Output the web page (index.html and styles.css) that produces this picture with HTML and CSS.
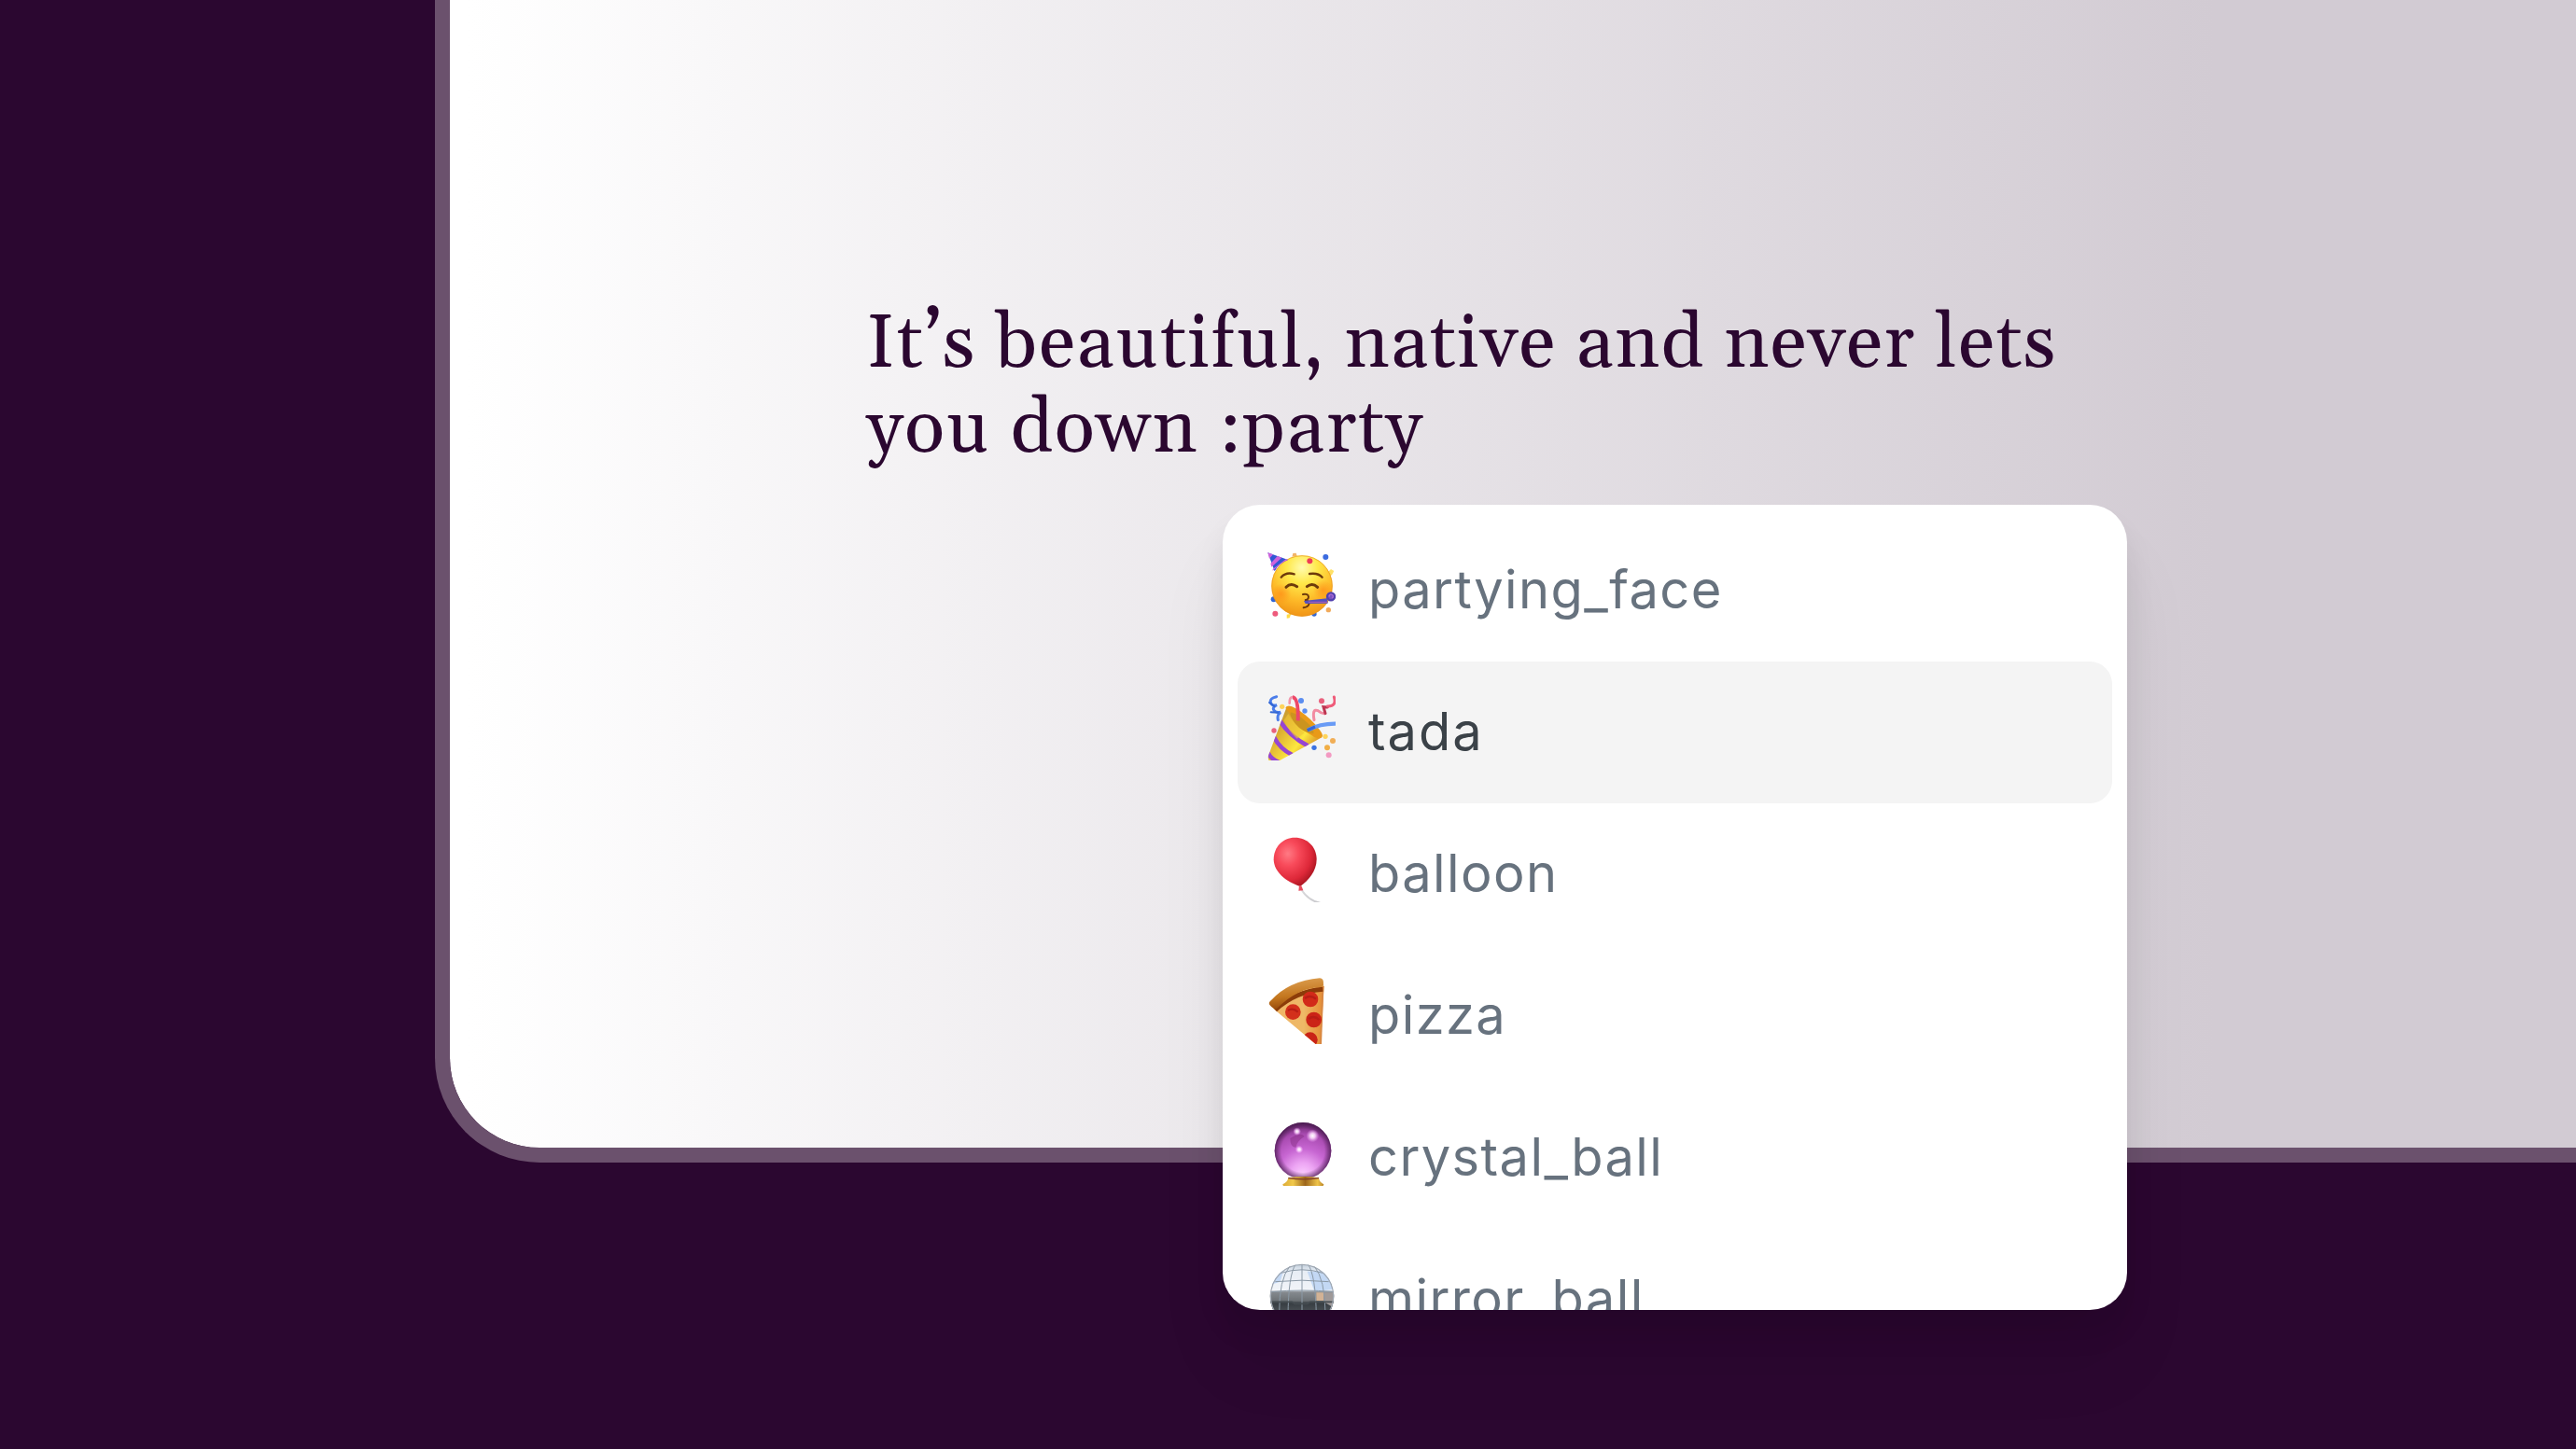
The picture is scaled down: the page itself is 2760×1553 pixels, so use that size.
FILE: index.html
```html
<!DOCTYPE html>
<html lang="en">
<head>
    <meta charset="UTF-8">
    <meta name="viewport" content="width=device-width, initial-scale=1.0">
    <title>Emoji autocomplete</title>
    <link rel="stylesheet" href="styles.css">
</head>
<body>
    <main class="editor">
        <p class="text">
            <span class="line">It’s beautiful, native and never lets</span>
            <span class="line">you down :party</span>
        </p>
    </main>

    <ul class="emoji-menu">
        <li class="emoji-item">
            <svg class="emoji" viewBox="54 63 219 216">
                <defs>
                    <radialGradient id="face" cx="0.5" cy="0.2" r="0.85">
                        <stop offset="0" stop-color="#fffbb0"/>
                        <stop offset="0.3" stop-color="#ffe94a"/>
                        <stop offset="0.65" stop-color="#fdb827"/>
                        <stop offset="1" stop-color="#ee8c12"/>
                    </radialGradient>
                    <radialGradient id="cheek">
                        <stop offset="0" stop-color="#ff9018" stop-opacity="0.75"/>
                        <stop offset="1" stop-color="#ff9018" stop-opacity="0"/>
                    </radialGradient>
                </defs>
                <path d="M133 80l3-11 10-1 3 10z" fill="#f2b469"/>
                <circle cx="74" cy="217" r="9" fill="#2c63d8"/>
                <circle cx="79" cy="263" r="9" fill="#ee5a7c"/>
                <path d="M116 266l14-3-5 14-9 1z" fill="#ffdb45"/>
                <circle cx="204" cy="264" r="8" fill="#3767cf"/>
                <circle cx="250" cy="251" r="8" fill="#f1ab5c"/>
                <path d="M248 130l10-10 10 6-7 13-12 4z" fill="#ffe168"/>
                <circle cx="241" cy="81" r="9" fill="#3b6be0"/>
                <circle cx="165" cy="174" r="98" fill="url(#face)"/>
                <circle cx="165" cy="174" r="97" fill="none" stroke="#e8961c" stroke-width="3" opacity="0.7"/>
                <circle cx="97" cy="200" r="33" fill="url(#cheek)"/>
                <circle cx="233" cy="188" r="33" fill="url(#cheek)"/>
                <path d="M55 67l65 23q-29 10-43 37z" fill="#3158d4"/>
                <path d="M55 67l17 6-12 13zM86 78l14 5-33 30-3-11zM113 88l7 2q-22 8-33 22l-16 13 0-5z" fill="#cf62dc"/>
                <circle cx="190" cy="94" r="9" fill="#ee3c58"/>
                <g fill="none" stroke="#6d3a0b" stroke-linecap="round">
                    <path d="M98 146q16-18 42-10" stroke-width="7"/>
                    <path d="M189 135q28-4 41 11" stroke-width="7"/>
                    <path d="M114 178q15-16 35-2M181 176q17-14 34 2" stroke-width="9"/>
                    <path d="M168 201q17-3 18 8 0 9-12 11 14 1 14 10-2 12-18 14" stroke-width="6"/>
                </g>
                <path d="M171 222l75-8 2 16-72 1z" fill="#5550bd"/>
                <path d="M186 226h60" stroke="#a05cb6" stroke-width="4"/>
                <circle cx="258" cy="208" r="12" fill="#7a51c0" stroke="#5140ae" stroke-width="7"/>
                <path d="M253 209a6 6 0 1 1 8 4" stroke="#a56ad5" stroke-width="4" fill="none"/>
            </svg>
            <span class="name">partying_face</span>
        </li>
        <li class="emoji-item selected">
            <svg class="emoji" viewBox="54 54 219 216">
                <defs>
                    <linearGradient id="cone" x1="0" y1="0.3" x2="0.7" y2="0.85">
                        <stop offset="0" stop-color="#b88a2a"/>
                        <stop offset="0.3" stop-color="#dcae32"/>
                        <stop offset="0.75" stop-color="#fde73f"/>
                        <stop offset="1" stop-color="#e0a22a"/>
                    </linearGradient>
                    <clipPath id="coneClip">
                        <path d="M117 95L57 254q-5 26 24 23L229 196z"/>
                    </clipPath>
                </defs>
                <path d="M117 95L57 254q-5 26 24 23L229 196z" fill="url(#cone)"/>
                <g clip-path="url(#coneClip)" fill="none" stroke="#9645d3">
                    <path d="M92 140q34 53 92 83" stroke-width="14"/>
                    <path d="M75 195q19 38 60 58" stroke-width="14"/>
                    <path d="M56 246q9 19 34 30" stroke-width="14"/>
                </g>
                <path d="M113 99q9-11 32 4 45 26 76 68 17 22 5 26-17 5-30-8-47-24-75-76-10-7-8-14z" fill="#e99a18"/>
                <path d="M128 115q23 5 52 32 26 23 22 37-35-3-58-31-19-24-16-38z" fill="#cb941f"/>
                <path d="M121 120q18 35 52 61l-24 19q-28-25-42-59z" fill="#f0c637" opacity="0.6"/>
                <g fill="none" stroke-linecap="round">
                    <path d="M83 65q-22 5-19 18t20 9q-16 8-9 17t21 6q-12 9-8 25" stroke="#4b7dea" stroke-width="9"/>
                    <path d="M60 84l16 12M65 115l23 1" stroke="#3467d3" stroke-width="6"/>
                    <path d="M125 86q-1-21 12-20" stroke="#f196ab" stroke-width="8"/>
                    <path d="M135 67q19 2 17 75" stroke="#ed4868" stroke-width="12" stroke-linecap="butt"/>
                    <path d="M184 172q42-22 96-20" stroke="#699bf5" stroke-width="13" stroke-linecap="butt"/>
                    <path d="M182 173l25-11" stroke="#3767d5" stroke-width="10" stroke-linecap="butt"/>
                    <path d="M204 140q-7-38 12-30 12 10 22 9" stroke="#f28ca2" stroke-width="9"/>
                    <path d="M240 119l-6-21 13 1" stroke="#bd3651" stroke-width="9"/>
                    <path d="M247 96q30 1 21-30" stroke="#ef5c7a" stroke-width="9"/>
                </g>
                <circle cx="162" cy="78" r="9" fill="#5b8df0"/>
                <circle cx="174" cy="111" r="8" fill="#5b8df0"/>
                <circle cx="228" cy="79" r="9" fill="#e9607d"/>
                <circle cx="101" cy="97" r="8" fill="#fed45b"/>
                <circle cx="75" cy="174" r="8" fill="#e9607d"/>
                <circle cx="240" cy="193" r="8" fill="#fed45b"/>
                <circle cx="264" cy="207" r="9" fill="#f1ae56"/>
                <circle cx="246" cy="229" r="9" fill="#f1ae45"/>
                <circle cx="204" cy="229" r="8" fill="#3a72e2"/>
                <circle cx="251" cy="253" r="9" fill="#f39ac2"/>
            </svg>
            <span class="name">tada</span>
        </li>
        <li class="emoji-item">
            <svg class="emoji" viewBox="54 45 219 216">
                <defs>
                    <radialGradient id="balloon" cx="0.33" cy="0.33" r="0.72">
                        <stop offset="0" stop-color="#ff7a84"/>
                        <stop offset="0.35" stop-color="#f84a5a"/>
                        <stop offset="0.75" stop-color="#de2839"/>
                        <stop offset="1" stop-color="#ab1622"/>
                    </radialGradient>
                    <linearGradient id="string" x1="0" x2="1">
                        <stop offset="0" stop-color="#d9d9dc"/>
                        <stop offset="1" stop-color="#c2c2c6"/>
                    </linearGradient>
                </defs>
                <path d="M164 222q26 40 75 44" stroke="url(#string)" stroke-width="6" fill="none"/>
                <path d="M142 53c40 0 70 30 70 70 0 38-27 69-53 87-46-15-84-46-85-86 0-41 29-71 68-71z" fill="url(#balloon)"/>
                <path d="M156 207l7 1 6 15-15 1z" fill="#e84b5c"/>
            </svg>
            <span class="name">balloon</span>
        </li>
        <li class="emoji-item">
            <svg class="emoji" viewBox="54 51 219 216">
                <defs>
                    <linearGradient id="crust" x1="0.4" y1="0" x2="0.6" y2="1">
                        <stop offset="0" stop-color="#dda052"/>
                        <stop offset="0.55" stop-color="#c4771f"/>
                        <stop offset="1" stop-color="#8f4309"/>
                    </linearGradient>
                    <linearGradient id="cheese" x1="0" x2="1">
                        <stop offset="0" stop-color="#f0b566"/>
                        <stop offset="0.6" stop-color="#eeb967"/>
                        <stop offset="1" stop-color="#e58a31"/>
                    </linearGradient>
                    <clipPath id="slice">
                        <path d="M72 152Q145 88 236 80L225 269q-8 5-15-1z"/>
                    </clipPath>
                </defs>
                <path d="M72 152Q145 88 236 80L225 269q-8 5-15-1z" fill="url(#cheese)"/>
                <path d="M232 80l-7 189" stroke="#d98842" stroke-width="6"/>
                <path d="M79 157Q145 97 232 91" stroke="#8c3c09" stroke-width="15" fill="none"/>
                <path d="M61 141q-5-8 5-15Q125 63 222 55q14 0 12 22-2 9-8 7Q150 86 83 154q-8 3-22-13z" fill="url(#crust)"/>
                <g clip-path="url(#slice)">
                    <circle cx="192" cy="123" r="25" fill="#d22a19"/>
                    <circle cx="136" cy="164" r="25" fill="#d3301b"/>
                    <circle cx="203" cy="189" r="25" fill="#cb2417"/>
                    <circle cx="191" cy="253" r="24" fill="#c92317"/>
                    <path d="M174 120q17-13 36 2M120 159q15-10 32 5M186 186q18-13 34 3" stroke="#b81e15" stroke-width="7" fill="none"/>
                </g>
            </svg>
            <span class="name">pizza</span>
        </li>
        <li class="emoji-item">
            <svg class="emoji" viewBox="54 42 219 216">
                <defs>
                    <radialGradient id="crystal" cx="0.5" cy="0.92" r="0.95">
                        <stop offset="0" stop-color="#fbccff"/>
                        <stop offset="0.22" stop-color="#eca4f3"/>
                        <stop offset="0.48" stop-color="#c766d2"/>
                        <stop offset="0.75" stop-color="#a84ab0"/>
                        <stop offset="1" stop-color="#571d5c"/>
                    </radialGradient>
                    <radialGradient id="crystalEdge">
                        <stop offset="0.76" stop-color="#3f1645" stop-opacity="0"/>
                        <stop offset="1" stop-color="#3f1645" stop-opacity="0.7"/>
                    </radialGradient>
                    <linearGradient id="gold" x1="0" x2="1">
                        <stop offset="0" stop-color="#dcab38"/>
                        <stop offset="0.25" stop-color="#f0c84a"/>
                        <stop offset="0.55" stop-color="#9d661b"/>
                        <stop offset="0.85" stop-color="#efc449"/>
                        <stop offset="1" stop-color="#b98428"/>
                    </linearGradient>
                    <radialGradient id="glint">
                        <stop offset="0" stop-color="#fff"/>
                        <stop offset="0.4" stop-color="#ffe0ff" stop-opacity="0.85"/>
                        <stop offset="1" stop-color="#f6a8ff" stop-opacity="0"/>
                    </radialGradient>
                </defs>
                <circle cx="168" cy="145" r="91" fill="url(#crystal)"/>
                <path d="M127 105q34-22 46-6-23 13-28 35-18 1-18-29z" fill="#7c2579" opacity="0.4"/>
                <circle cx="168" cy="145" r="91" fill="url(#crystalEdge)"/>
                <circle cx="149" cy="83" r="13" fill="url(#glint)"/>
                <circle cx="199" cy="97" r="21" fill="url(#glint)"/>
                <circle cx="156" cy="141" r="13" fill="url(#glint)"/>
                <path d="M121 232q48-8 98 0 2 15 16 21-1 9-17 10-48 6-97 0-18-2-18-10 15-6 18-21z" fill="url(#gold)"/>
                <path d="M121 233q48 7 98 0" stroke="#7e3f27" stroke-width="4" fill="none"/>
            </svg>
            <span class="name">crystal_ball</span>
        </li>
        <li class="emoji-item">
            <svg class="emoji" viewBox="54 63 219 216">
                <defs>
                    <linearGradient id="mirror" x1="0" y1="0" x2="0" y2="1">
                        <stop offset="0" stop-color="#b5c4d2"/>
                        <stop offset="0.12" stop-color="#e7edf5"/>
                        <stop offset="0.42" stop-color="#f1f4f8"/>
                        <stop offset="0.45" stop-color="#858a8f"/>
                        <stop offset="0.58" stop-color="#6d7276"/>
                        <stop offset="0.62" stop-color="#373d42"/>
                        <stop offset="1" stop-color="#6b7075"/>
                    </linearGradient>
                    <clipPath id="ball">
                        <circle cx="165" cy="177" r="103"/>
                    </clipPath>
                </defs>
                <g clip-path="url(#ball)">
                    <path d="M60 70h210v210H60z" fill="url(#mirror)"/>
                    <path d="M182 98l62-2 22 60-61 6zM76 105l30-14-11 40-29 9z" fill="#c3d8f4"/>
                    <path d="M211 166h24v26h-24z" fill="#d2b295"/>
                    <path d="M235 166h34v50l-34-20z" fill="#9f9998"/>
                    <g fill="none" stroke="#8b99a6" stroke-width="3">
                        <path d="M98 103q67-21 134 0M79 131q86-9 172 0M65 164q100-10 204 0"/>
                        <path d="M165 74v180M145 75q-24 32-25 170M184 75q25 32 27 170M126 81q-35 42-34 150M205 82q34 41 35 150"/>
                    </g>
                    <path d="M62 196h70l10 6h40l10-6h76" stroke="#454c51" stroke-width="5" fill="none"/>
                    <circle cx="165" cy="177" r="101" stroke="#a0a8b2" stroke-width="4" fill="none"/>
                </g>
            </svg>
            <span class="name">mirror_ball</span>
        </li>
    </ul>
</body>
</html>
```
FILE: styles.css
```css
* {
    box-sizing: border-box;
}

body {
    margin: 0;
    height: 1553px;
    overflow: hidden;
    background: #2b0730;
}

.editor {
    margin-left: 466px;
    height: 1246px;
    padding: 324px 0 0 446px;
    border: solid #6b516d;
    border-width: 0 0 16px 16px;
    border-bottom-left-radius: 112px;
    background: linear-gradient(90deg, #fff 20px, #d2cbd3 1890px) padding-box;
}

.text {
    margin: 0;
    font-family: Georgia, Gelasio, "Liberation Serif", serif;
    font-size: 80px;
    line-height: 91px;
    letter-spacing: 1.6px;
    color: #2b0730;
}

.line {
    display: block;
    white-space: nowrap;
}

/* the popup hangs below the caret, over the edge of the editor */
.emoji-menu {
    position: absolute;
    left: 1310px;
    top: 541px;
    width: 969px;
    height: 863px;
    margin: 0;
    padding: 16px;
    list-style: none;
    overflow: hidden;
    border-radius: 40px;
    background: #fff;
    box-shadow: 0 60px 80px rgba(0, 0, 0, 0.06), 0 24px 32px rgba(0, 0, 0, 0.08);
}

.emoji-item {
    display: flex;
    align-items: center;
    gap: 35px;
    height: 152px;
    padding-left: 32px;
    border-radius: 24px;
    font-family: Inter, sans-serif;
    font-size: 56px;
    letter-spacing: 1.4px;
    color: #67727e;
}

.emoji-item.selected {
    background: #f4f4f4;
    color: #3b4248;
    letter-spacing: 2px;
}

.emoji {
    width: 73px;
    height: 72px;
    margin-bottom: 12px;
}

.name {
    margin-bottom: 2px;
}
```
